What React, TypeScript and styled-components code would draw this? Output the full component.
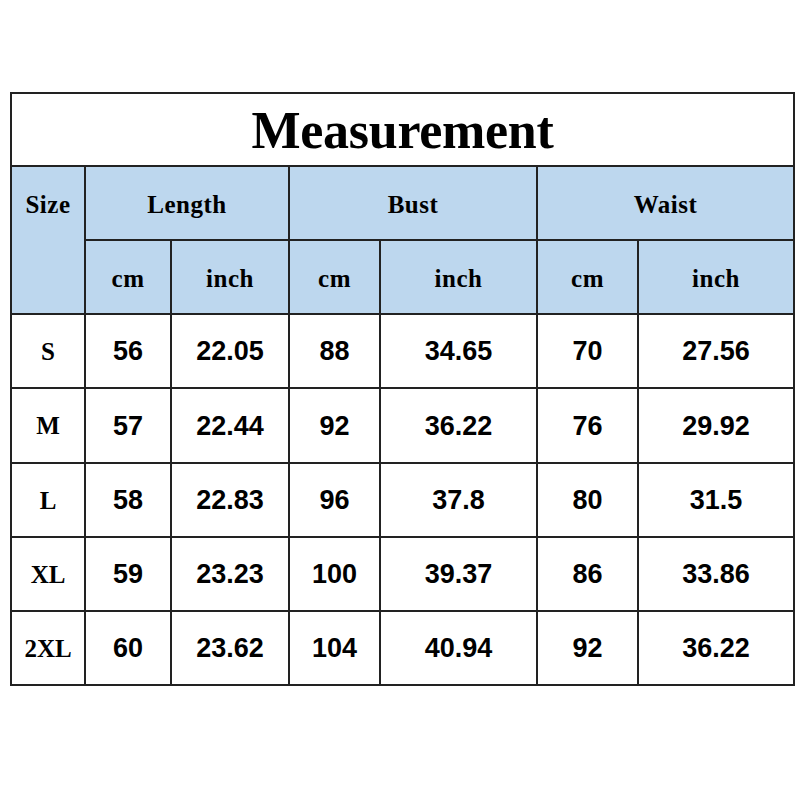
import styled, { createGlobalStyle } from "styled-components";

const GlobalStyle = createGlobalStyle`
  html, body {
    margin: 0;
    padding: 0;
    background: #ffffff;
  }
`;

const Page = styled.div`
  width: 800px;
  height: 800px;
  box-sizing: border-box;
  padding: 92px 0 0 10px;
  background: #ffffff;
`;

const Grid = styled.div`
  display: grid;
  grid-template-columns: 72px 84px 116px 89px 155px 99px 154px;
  grid-template-rows: 71px 72px 72px 72px 73px 72px 72px 72px;
  gap: 2px;
  padding: 2px;
  width: fit-content;
  background: #222222;
`;

interface CellProps {
  $head?: boolean;
  $span?: number;
  $rows?: number;
  $num?: boolean;
}

const Cell = styled.div<CellProps>`
  display: flex;
  align-items: center;
  justify-content: center;
  box-sizing: border-box;
  background: ${(p) => (p.$head ? "#bdd7ee" : "#ffffff")};
  grid-column: span ${(p) => p.$span || 1};
  grid-row: span ${(p) => p.$rows || 1};
  padding-top: ${(p) => (p.$head ? "4px" : "1px")};
  color: #000000;
  font-weight: bold;
  font-family: ${(p) =>
    p.$num
      ? '"Liberation Sans", Arial, sans-serif'
      : '"Liberation Serif", "Times New Roman", serif'};
  font-size: ${(p) => (p.$num ? "27px" : "25px")};
  letter-spacing: ${(p) => (p.$head ? "0.5px" : "0")};
`;

/* the "Size" label sits level with the top header row, not centred on both */
const SizeHead = styled(Cell)`
  padding-bottom: 74px;
`;

const Title = styled(Cell)`
  font-size: 52px;
  letter-spacing: -0.3px;
  padding-top: 2px;
`;

const rows = [
  ["S", "56", "22.05", "88", "34.65", "70", "27.56"],
  ["M", "57", "22.44", "92", "36.22", "76", "29.92"],
  ["L", "58", "22.83", "96", "37.8", "80", "31.5"],
  ["XL", "59", "23.23", "100", "39.37", "86", "33.86"],
  ["2XL", "60", "23.62", "104", "40.94", "92", "36.22"],
];

export default function App() {
  return (
    <>
      <GlobalStyle />
      <Page>
        <Grid>
          <Title $span={7}>Measurement</Title>
          <SizeHead $head $rows={2}>Size</SizeHead>
          <Cell $head $span={2}>Length</Cell>
          <Cell $head $span={2}>Bust</Cell>
          <Cell $head $span={2}>Waist</Cell>
          {["cm", "inch", "cm", "inch", "cm", "inch"].map((u, i) => (
            <Cell $head key={i}>
              {u}
            </Cell>
          ))}
          {rows.map((r) =>
            r.map((v, i) => (
              <Cell key={r[0] + i} $num={i > 0}>
                {v}
              </Cell>
            ))
          )}
        </Grid>
      </Page>
    </>
  );
}
